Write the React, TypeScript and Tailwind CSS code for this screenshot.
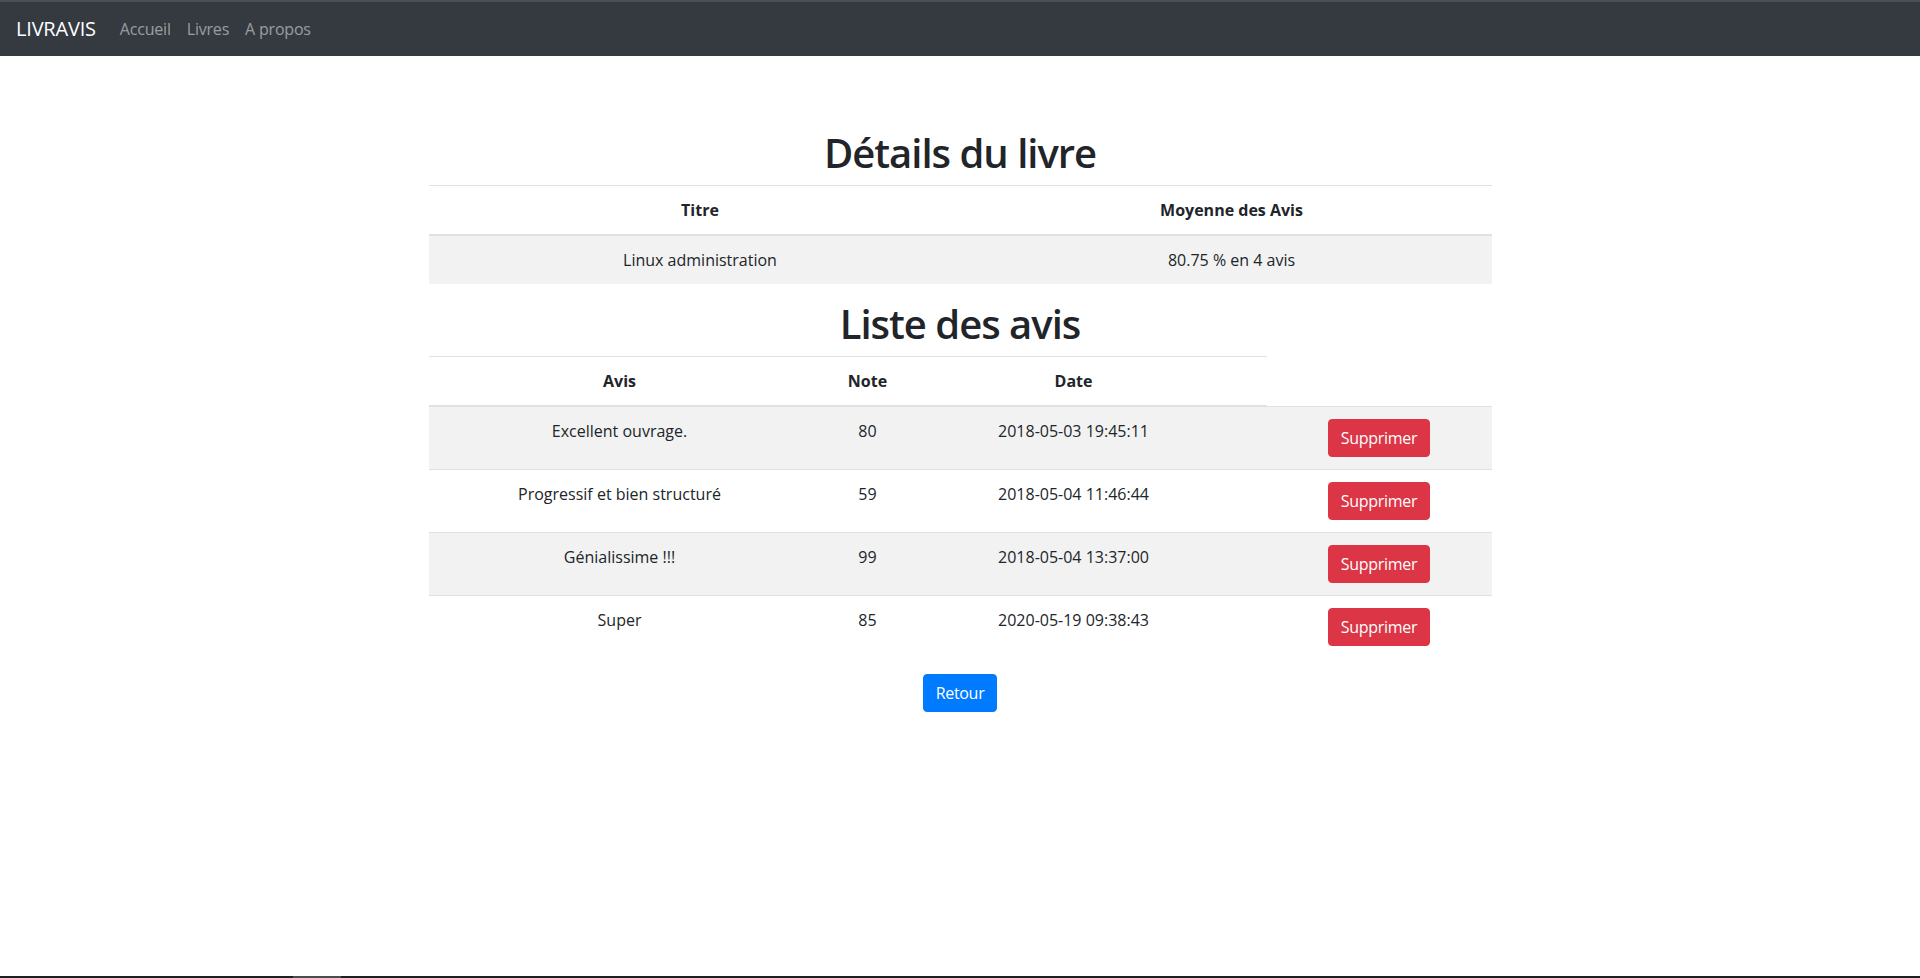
import React from "react";

const avis = [
  { id: 1, texte: "Excellent ouvrage.", note: 80, date: "2018-05-03 19:45:11" },
  { id: 2, texte: "Progressif et bien structuré", note: 59, date: "2018-05-04 11:46:44" },
  { id: 3, texte: "Génialissime !!!", note: 99, date: "2018-05-04 13:37:00" },
  { id: 4, texte: "Super", note: 85, date: "2020-05-19 09:38:43" },
];

const font = "font-['Segoe_UI','Open_Sans','Liberation_Sans',sans-serif]";

export default function App() {
  return (
    <div className={`h-[978px] flex flex-col bg-white text-[#212529] text-base leading-6 ${font}`}>
      {/* Navbar */}
      <nav className="h-14 flex items-center px-4 bg-[#343a40] border-t-2 border-[#4b4f54]">
        <span className="text-xl leading-[30px] text-white mr-4 tracking-[-0.2px]">LIVRAVIS</span>
        <a className="px-2 text-white/50 tracking-[-0.2px]">Accueil</a>
        <a className="px-2 text-white/50 tracking-[-0.2px]">Livres</a>
        <a className="px-2 text-white/50 tracking-[-0.2px]">A propos</a>
      </nav>

      <main className="flex-1">
        <div className="w-[1063px] mx-auto pt-[73px]">
          <h1 className="text-[40px] leading-[48px] font-semibold tracking-[-1px] text-center mb-2">Détails du livre</h1>
          <table className="w-full table-fixed border-collapse mb-4 text-center">
            <thead>
              <tr>
                <th className="w-[543px] p-3 border-t border-b-2 border-[#dee2e6] font-bold">Titre</th>
                <th className="p-3 border-t border-b-2 border-[#dee2e6] font-bold">Moyenne des Avis</th>
              </tr>
            </thead>
            <tbody>
              <tr className="bg-[#f2f2f2]">
                <td className="p-3 align-top">Linux administration</td>
                <td className="p-3 align-top">80.75 % en 4 avis</td>
              </tr>
            </tbody>
          </table>

          <h1 className="text-[40px] leading-[48px] font-semibold tracking-[-1px] text-center mb-2">Liste des avis</h1>
          <table className="w-full table-fixed border-collapse mb-4 text-center">
            <thead>
              <tr>
                <th className="w-[382px] p-3 border-t border-b-2 border-[#dee2e6] font-bold">Avis</th>
                <th className="w-[114px] p-3 border-t border-b-2 border-[#dee2e6] font-bold">Note</th>
                <th className="w-[298px] p-3 border-t border-b-2 border-[#dee2e6] font-bold">Date</th>
                <th className="w-[44px] p-0 border-t border-b-2 border-[#dee2e6]"></th>
              </tr>
            </thead>
            <tbody>
              {avis.map((a, i) => (
                <tr key={a.id} className={i % 2 === 0 ? "bg-[#f2f2f2]" : ""}>
                  <td className="p-3 align-top border-t border-[#dee2e6]">{a.texte}</td>
                  <td className="p-3 align-top border-t border-[#dee2e6]">{a.note}</td>
                  <td className="p-3 align-top border-t border-[#dee2e6]">{a.date}</td>
                  <td className="p-0 align-top border-t border-[#dee2e6]"></td>
                  <td className="p-3 align-top border-t border-[#dee2e6]">
                    <button className="bg-[#dc3545] border border-[#dc3545] text-white rounded px-3 py-1.5 leading-6 tracking-[-0.3px]">
                      Supprimer
                    </button>
                  </td>
                </tr>
              ))}
            </tbody>
          </table>

          <div className="flex justify-center">
            <button className="bg-[#007bff] border border-[#007bff] text-white rounded px-3 py-1.5 leading-6 tracking-[-0.3px]">
              Retour
            </button>
          </div>
        </div>
      </main>

      <div className="h-[2px] bg-[#202020] flex">
        <div className="ml-[293px] w-[48px] bg-[#4d4d4d]" />
      </div>
    </div>
  );
}
